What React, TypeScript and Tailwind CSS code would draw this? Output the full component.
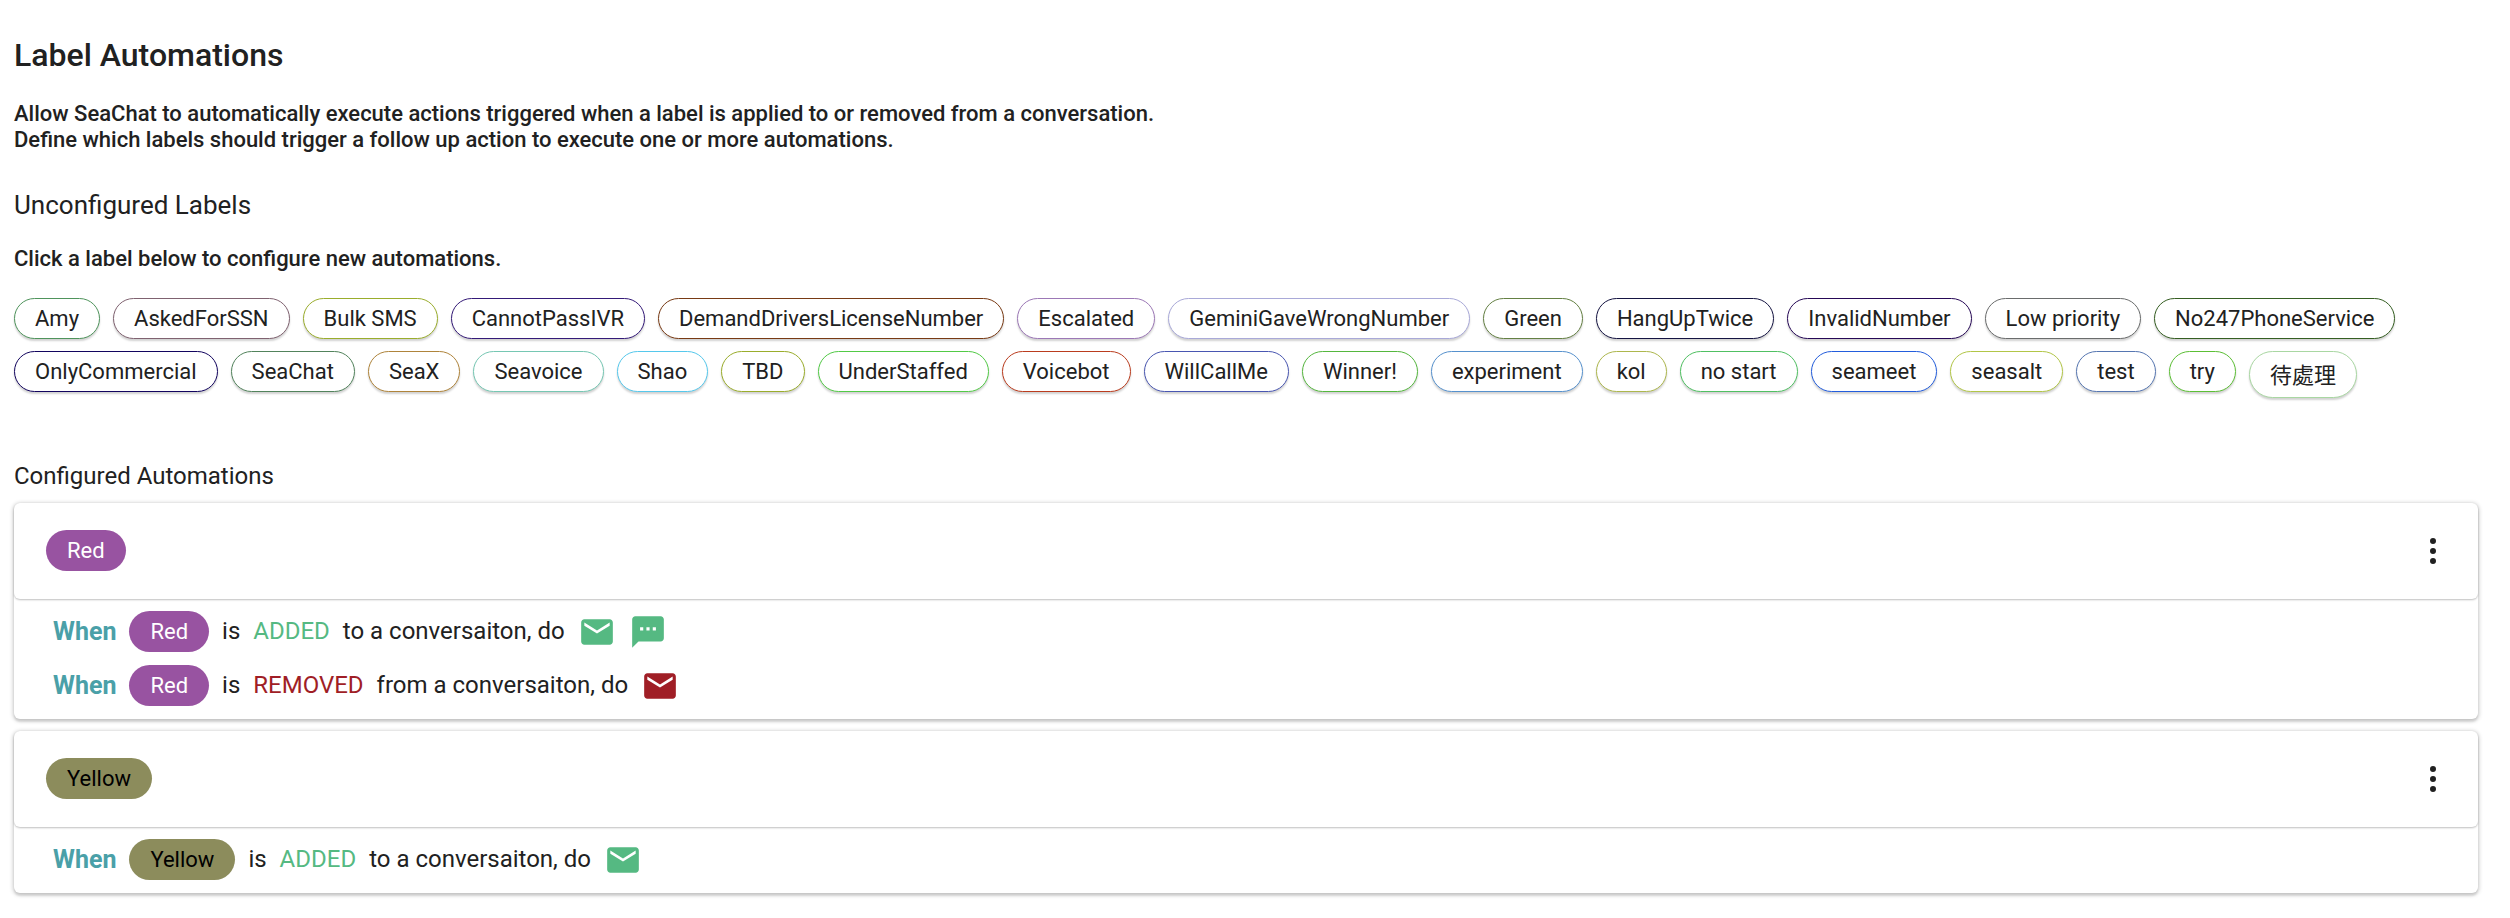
import { BsThreeDotsVertical } from "react-icons/bs";
import { MdEmail, MdTextsms } from "react-icons/md";

type Label = { name: string; border: string; tall?: boolean };

const labels: Label[] = [
  { name: "Amy", border: "border-[#4f945c]" },
  { name: "AskedForSSN", border: "border-[#7f6270]" },
  { name: "Bulk SMS", border: "border-[#9aad2c]" },
  { name: "CannotPassIVR", border: "border-[#341a78]" },
  { name: "DemandDriversLicenseNumber", border: "border-[#783a14]" },
  { name: "Escalated", border: "border-[#9c78b6]" },
  { name: "GeminiGaveWrongNumber", border: "border-[#a9a9d8]" },
  { name: "Green", border: "border-[#648043]" },
  { name: "HangUpTwice", border: "border-[#151442]" },
  { name: "InvalidNumber", border: "border-[#260856]" },
  { name: "Low priority", border: "border-[#6a6c6c]" },
  { name: "No247PhoneService", border: "border-[#355e22]" },
  { name: "OnlyCommercial", border: "border-[#12045e]" },
  { name: "SeaChat", border: "border-[#52835c]" },
  { name: "SeaX", border: "border-[#af843b]" },
  { name: "Seavoice", border: "border-[#76c7b3]" },
  { name: "Shao", border: "border-[#56c8ec]" },
  { name: "TBD", border: "border-[#9aad2c]" },
  { name: "UnderStaffed", border: "border-[#52ca46]" },
  { name: "Voicebot", border: "border-[#ba3c1e]" },
  { name: "WillCallMe", border: "border-[#4956b1]" },
  { name: "Winner!", border: "border-[#55b73e]" },
  { name: "experiment", border: "border-[#5691cd]" },
  { name: "kol", border: "border-[#adb74d]" },
  { name: "no start", border: "border-[#50c062]" },
  { name: "seameet", border: "border-[#235ddc]" },
  { name: "seasalt", border: "border-[#b2c647]" },
  { name: "test", border: "border-[#5676b1]" },
  { name: "try", border: "border-[#5cbf35]" },
  { name: "待處理", border: "border-[#a9d7a2]", tall: true },
];

type Rule = { event: "ADDED" | "REMOVED"; actions: ("email" | "sms")[] };
type Automation = { label: string; chip: string; rules: Rule[] };

const automations: Automation[] = [
  {
    label: "Red",
    chip: "bg-[#9853a1] text-white",
    rules: [
      { event: "ADDED", actions: ["email", "sms"] },
      { event: "REMOVED", actions: ["email"] },
    ],
  },
  {
    label: "Yellow",
    chip: "bg-[#8c8c5c] text-black",
    rules: [{ event: "ADDED", actions: ["email"] }],
  },
];

function Chip({ label, chip }: { label: string; chip: string }) {
  return <span className={`rounded-full px-[21px] text-[22px] leading-[41px] ${chip}`}>{label}</span>;
}

function RuleRow({ automation, rule }: { automation: Automation; rule: Rule }) {
  const added = rule.event === "ADDED";
  const color = added ? "text-[#55b982]" : "text-[#a01e26]";
  return (
    <li className="flex items-center text-[24px] leading-[41px]">
      <span className="mr-[13px] text-[25px] font-bold text-[#4aa0a8]">When</span>
      <Chip label={automation.label} chip={automation.chip} />
      <span className="ml-[13px]">is</span>
      <span className={`mx-[13px] ${color}`}>{rule.event}</span>
      <span>{added ? "to" : "from"} a conversaiton, do</span>
      <span className={`ml-[13px] flex gap-[13px] ${color}`}>
        {rule.actions.map((action) =>
          action === "email" ? (
            <MdEmail key={action} size={38} role="img" aria-label="Send email" />
          ) : (
            <MdTextsms key={action} size={38} role="img" aria-label="Send SMS" />
          ),
        )}
      </span>
    </li>
  );
}

function AutomationCard({ automation }: { automation: Automation }) {
  return (
    <article className="rounded-[6px] bg-white shadow-[0_3px_2px_rgba(0,0,0,0.08),0_1px_4px_1px_rgba(0,0,0,0.2)]">
      <header className="flex h-24 items-center justify-between rounded-[6px] pr-[29px] pb-px pl-8 shadow-[0_1px_2px_rgba(0,0,0,0.25)]">
        <Chip label={automation.label} chip={automation.chip} />
        <button type="button" aria-label={`${automation.label} options`}>
          <BsThreeDotsVertical size={32} />
        </button>
      </header>
      <ul className="flex flex-col gap-[13px] pt-3 pb-[13px] pl-[39px]">
        {automation.rules.map((rule) => (
          <RuleRow key={rule.event} automation={automation} rule={rule} />
        ))}
      </ul>
    </article>
  );
}

export default function App() {
  return (
    <main className="min-h-screen bg-white pt-[34px] pr-8 pb-6 pl-[14px] font-['Roboto','Noto_Sans_CJK_TC',sans-serif] text-[#212121]">
      <h1 className="text-[32px] leading-[42px] font-medium">Label Automations</h1>
      <p className="mt-[25px] text-[22px] leading-[26px] font-medium">
        Allow SeaChat to automatically execute actions triggered when a label is applied to or removed from a conversation.
        <br />
        Define which labels should trigger a follow up action to execute one or more automations.
      </p>
      <h2 className="mt-9 text-[26px] leading-[32px]">Unconfigured Labels</h2>
      <p className="mt-[25px] text-[22px] leading-[26px] font-medium">Click a label below to configure new automations.</p>
      <div className="mt-[26px] flex flex-wrap items-start gap-x-[13px] gap-y-3">
        {labels.map(({ name, border, tall }) => (
          <button
            key={name}
            type="button"
            className={`rounded-[24px] border bg-white px-5 text-[22px] leading-[27px] shadow-[0_2px_2px_rgba(0,0,0,0.18)] ${tall ? "pt-[10px] pb-2" : "py-[6px]"} ${border}`}
          >
            {name}
          </button>
        ))}
      </div>
      <h2 className="mt-[62px] text-[24px] leading-[32px]">Configured Automations</h2>
      <div className="mt-[11px] flex flex-col gap-3">
        {automations.map((automation) => (
          <AutomationCard key={automation.label} automation={automation} />
        ))}
      </div>
    </main>
  );
}
